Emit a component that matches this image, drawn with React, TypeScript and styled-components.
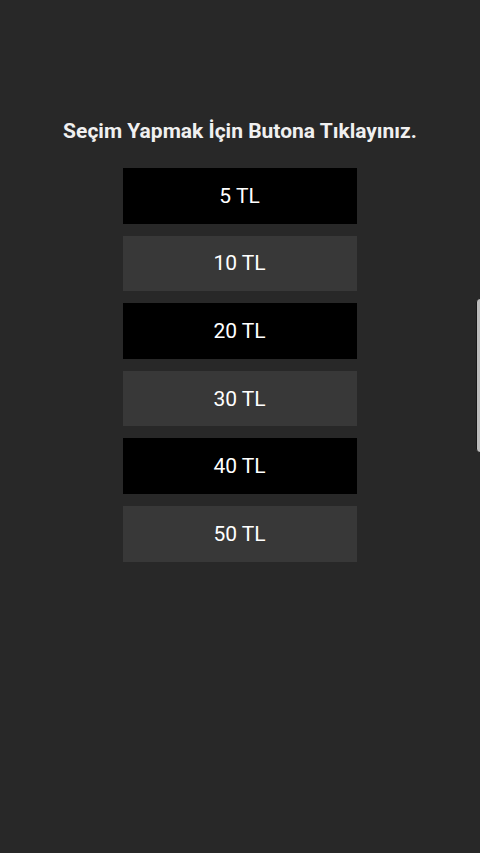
import React from "react";
import styled, { createGlobalStyle } from "styled-components";

const Global = createGlobalStyle`
  html, body { margin: 0; padding: 0; background: #282828; }
  body { font-family: Roboto, "Noto Sans", sans-serif; }
  #root { min-height: 853px; }
`;

const Page = styled.div`
  width: 480px;
  height: 853px;
  background: #282828;
  display: flex;
  flex-direction: column;
  align-items: center;
  padding-top: 118px;
  box-sizing: border-box;
  position: relative;
  overflow: hidden;
`;

const Title = styled.h1`
  margin: 0;
  font-size: 21px;
  font-weight: 700;
  color: #f0f0f0;
  line-height: 26px;
  text-align: center;
  white-space: nowrap;
`;

const List = styled.div`
  margin-top: 24px;
  display: flex;
  flex-direction: column;
  gap: 12px;
`;

const Choice = styled.button<{ $dark: boolean }>`
  width: 234px;
  height: 55.6px;
  border: none;
  margin: 0 0 0 -1px;
  padding: 0;
  background: ${(p) => (p.$dark ? "#000000" : "#383838")};
  color: #ffffff;
  font-family: Roboto, "Noto Sans", sans-serif;
  font-size: 21px;
  font-weight: 400;
  display: flex;
  align-items: center;
  justify-content: center;
  cursor: pointer;
`;

const EdgeHandle = styled.div`
  position: absolute;
  right: -4px;
  top: 298px;
  width: 8px;
  height: 155px;
  background: #bdbdbd;
  border: 1px solid #1a1a1a;
  border-radius: 5px;
  box-sizing: border-box;
`;

const amounts = [5, 10, 20, 30, 40, 50];

export default function App() {
  return (
    <>
      <Global />
      <Page>
        <Title>Seçim Yapmak İçin Butona Tıklayınız.</Title>
        <List>
          {amounts.map((a, i) => (
            <Choice key={a} $dark={i % 2 === 0}>
              {a} TL
            </Choice>
          ))}
        </List>
        <EdgeHandle />
      </Page>
    </>
  );
}
